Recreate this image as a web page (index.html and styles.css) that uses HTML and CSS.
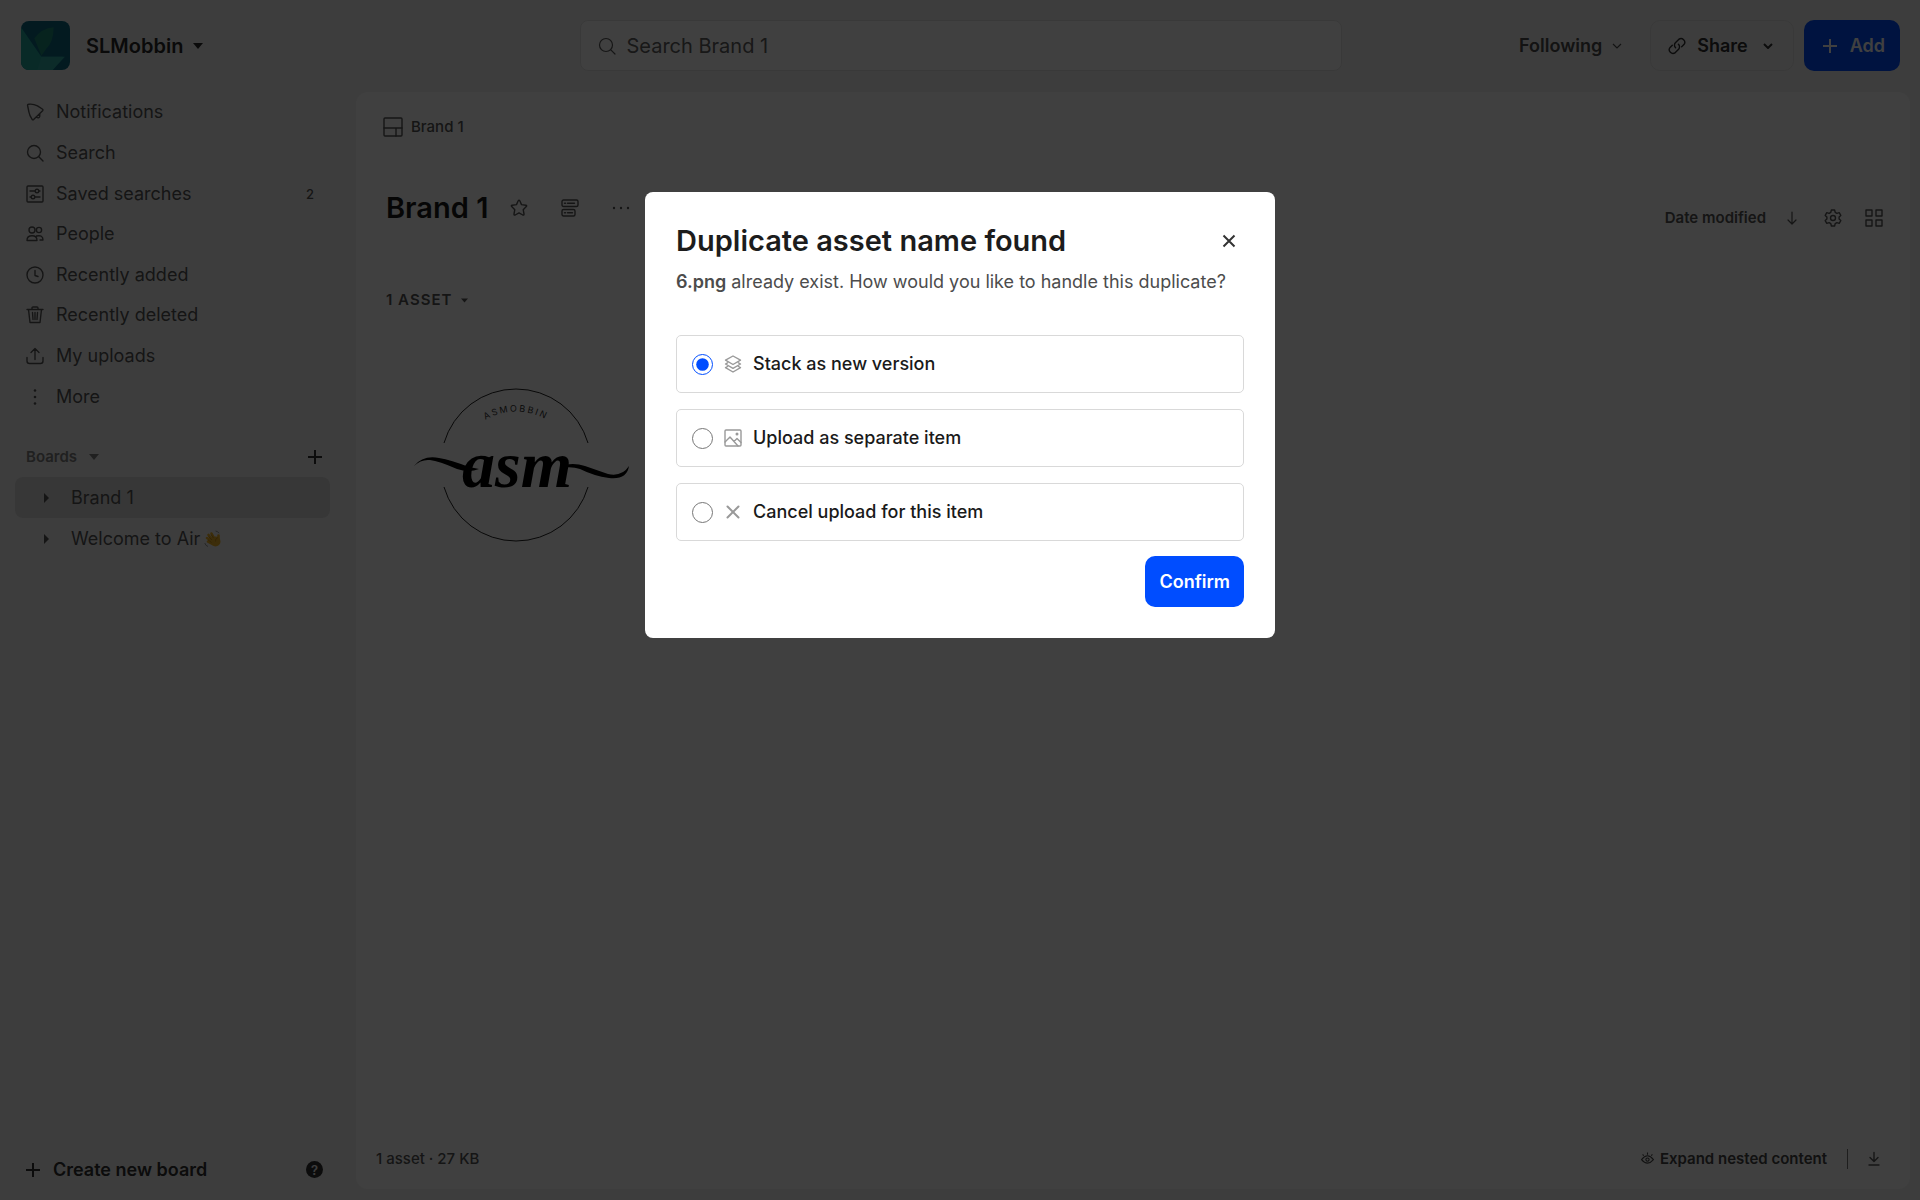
FILE: index.html
```html
<!DOCTYPE html>
<html lang="en">
<head>
    <meta charset="UTF-8">
    <meta name="viewport" content="width=device-width, initial-scale=1.0">
    <title>Brand 1</title>
    <link rel="stylesheet" href="styles.css">
</head>
<body>
    <div class="app">
        <header class="topbar">
            <button class="workspace">
                <svg class="workspace-logo" viewBox="0 0 48 48">
                    <rect width="48" height="48" fill="#0c6880"/>
                    <path d="M0 6 20 35 H41 L31 48 H0z" fill="#24a89c"/>
                    <path d="M13 17 Q20 7 32 6 Q32 20 25 27 L20 34z" fill="#1c8c78"/>
                    <path d="M20 35 H43 L31 48 H16z" fill="#30aca4"/>
                </svg>
                <span>SLMobbin</span>
                <svg class="caret" viewBox="0 0 10 6"><path d="M0 0h10L5 6z"/></svg>
            </button>
            <div class="search-box">
                <svg class="icon thin" viewBox="0 0 18 18"><circle cx="8" cy="8" r="6.5"/><path d="M12.8 12.8 17 17"/></svg>
                <input type="text" placeholder="Search Brand 1" aria-label="Search Brand 1">
            </div>
            <div class="actions">
                <button class="following">Following <svg class="chevron" viewBox="0 0 10 6"><path d="M1 1l4 4 4-4"/></svg></button>
                <button class="share">
                    <svg class="icon" viewBox="0 0 18 18"><path d="M7.6 10.8A3.6 3.6 0 0 1 7.4 5.700L10.700 2.400A3.700 3.700 0 0 1 15.900 7.600L13.700 9.800M10.400 7.200A3.600 3.600 0 0 1 10.600 12.300L7.300 15.600A3.700 3.700 0 0 1 2.100 10.400L4.300 8.200"/></svg>
                    <span>Share</span>
                    <svg class="chevron bold" viewBox="0 0 10 6"><path d="M1 1l4 4 4-4"/></svg>
                </button>
                <button class="btn-primary add"><svg class="plus" viewBox="0 0 14 14"><path d="M7 0v14M0 7h14"/></svg> Add</button>
            </div>
        </header>

        <aside class="sidebar">
            <nav class="nav">
                <a href="#"><svg class="icon" viewBox="0 0 18 18"><path d="M1.600 2.500Q1.300 1.300 2.500 1.300Q7 .6 11.500 2.800L16.300 6Q17.400 6.800 16.600 7.800L7.600 16.600Q6.600 17.300 6 16.200Q3.500 12.500 2.900 9zM10.400 14.200Q12.800 15.800 13.700 13.400L13.800 10.800"/></svg>Notifications</a>
                <a href="#"><svg class="icon" viewBox="0 0 18 18"><circle cx="8" cy="8" r="6.5"/><path d="M12.8 12.8 17 17"/></svg>Search</a>
                <a href="#"><svg class="icon" viewBox="0 0 18 18"><rect x="1" y="1" width="16" height="16" rx="1"/><path d="M4 6h5M13 6h1M4 12h1M9 12h5"/><circle cx="11" cy="6" r="1.800"/><circle cx="7" cy="12" r="1.800"/></svg>Saved searches <span class="count">2</span></a>
                <a href="#"><svg class="icon" viewBox="0 0 18 18"><circle cx="6" cy="5" r="3"/><circle cx="13" cy="5" r="2.600"/><path d="M1 15.500Q1 10.800 6 10.800T11 15.500zM10.500 11Q17 9.500 17 15h-3"/></svg>People</a>
                <a href="#"><svg class="icon" viewBox="0 0 18 18"><circle cx="9" cy="9" r="8"/><path d="M9 4.500V9.500l3 1"/></svg>Recently added</a>
                <a href="#"><svg class="icon" viewBox="0 0 18 18"><path d="M1 3.500h16M6 3.500V2q0-1 1-1h4q1 0 1 1v1.500M2.500 3.500 4 16.500h10l1.500-13M6.500 6.500l.5 7M9 6.500v7M11.500 6.500l-.5 7"/></svg>Recently deleted</a>
                <a href="#"><svg class="icon" viewBox="0 0 18 18"><path d="M9 12.500V1.500M5 5.500l4-4 4 4M1 10.500V14q0 2.500 2.500 2.500h11Q17 16.500 17 14v-3.500"/></svg>My uploads</a>
                <a href="#"><svg class="icon dots" viewBox="0 0 18 18"><circle cx="9" cy="2.500" r="1.300"/><circle cx="9" cy="9" r="1.300"/><circle cx="9" cy="15.500" r="1.300"/></svg>More</a>
            </nav>

            <div class="boards-head">
                <button class="boards-toggle">Boards <svg class="caret" viewBox="0 0 10 6"><path d="M0 0h10L5 6z"/></svg></button>
                <button class="icon-btn" aria-label="New board"><svg class="plus" viewBox="0 0 14 14"><path d="M7 0v14M0 7h14"/></svg></button>
            </div>
            <div class="boards">
                <a class="active" href="#"><svg class="arrow" viewBox="0 0 5 10"><path d="M0 0v10l5-5z"/></svg>Brand 1</a>
                <a href="#"><svg class="arrow" viewBox="0 0 5 10"><path d="M0 0v10l5-5z"/></svg>Welcome to Air
                    <svg class="wave" viewBox="0 0 18 18">
                        <path d="M11 10 7.500 3.500M9.500 11 4.500 5M9 12 3 8M9 14 4 11.500M14.500 11V5.500" stroke="#f0b428" stroke-width="2.600" stroke-linecap="round"/>
                        <circle cx="11.500" cy="11.500" r="5" fill="#f0b428"/>
                        <path d="M9.500 8 7 4.500M8 10 4.500 6.500M7.500 12.500 4 9.800M14 7.500q-3 1-2.500 4" stroke="#b87c18" stroke-width=".7" fill="none"/>
                        <path d="M11.500 1q2.500.3 3.500 2.200M.8 13q.6 2.700 3.200 3.500" stroke="#999" fill="none"/>
                    </svg>
                </a>
            </div>

            <div class="sidebar-foot">
                <button class="create"><svg class="plus" viewBox="0 0 14 14"><path d="M7 0v14M0 7h14"/></svg> Create new board</button>
                <button class="help" aria-label="Help">?</button>
            </div>
        </aside>

        <main class="panel">
            <div class="breadcrumb">
                <svg class="icon" viewBox="0 0 20 20"><rect x="1" y="1" width="18" height="18" rx="1"/><path d="M1 11h18M13 11v8"/></svg>
                <a href="#">Brand 1</a>
            </div>

            <div class="title-row">
                <h1>Brand 1</h1>
                <button class="icon-btn" aria-label="Favorite"><svg class="icon" viewBox="0 0 18 18"><path d="M8.200 1.800Q9 .4 9.800 1.800L11.500 5.600 15.800 6.200Q17.300 6.500 16.300 7.600L13.200 10.700 14 15Q14.200 16.600 12.800 16L9 13.900 5.200 16Q3.800 16.600 4 15L4.800 10.700 1.700 7.600Q.7 6.500 2.200 6.200L6.500 5.600z"/></svg></button>
                <button class="icon-btn" aria-label="Custom fields"><svg class="icon" viewBox="0 0 18 18"><rect x="1" y="1" width="16" height="6.500" rx="1.500"/><rect x="1" y="10.500" width="13" height="6.500" rx="1.500"/><path d="M3.500 4.300h1M6.500 4.300h7M3.500 13.700h1M6.500 13.700h5"/></svg></button>
                <button class="icon-btn" aria-label="More options"><svg class="icon dots" viewBox="0 0 18 18"><circle cx="2" cy="9" r="1.200"/><circle cx="9" cy="9" r="1.200"/><circle cx="16" cy="9" r="1.200"/></svg></button>
                <div class="view-tools">
                    <button class="sort">Date modified</button>
                    <button class="icon-btn" aria-label="Sort direction"><svg class="icon thin" viewBox="0 0 18 18"><path d="M9 3v12M5 11l4 4 4-4"/></svg></button>
                    <button class="icon-btn" aria-label="View settings"><svg class="icon" viewBox="0 0 18 18"><path d="M7.400 1h3.200l.6 2.300 1.700 1 2.300-.7 1.600 2.800L15.100 8v2l1.700 1.600-1.600 2.800-2.300-.7-1.700 1-.6 2.300H7.400l-.6-2.300-1.700-1-2.300.7-1.600-2.800L2.900 10V8L1.200 6.400l1.600-2.800 2.300.7 1.700-1z"/><circle cx="9" cy="9" r="2.500"/></svg></button>
                    <button class="icon-btn" aria-label="Grid view"><svg class="icon" viewBox="0 0 18 18"><path d="M1 1h6v6H1zM11 1h6v6h-6zM1 11h6v6H1zM11 11h6v6h-6z"/></svg></button>
                </div>
            </div>

            <button class="asset-count">1 ASSET <svg class="caret" viewBox="0 0 10 6"><path d="M0 0h10L5 6z"/></svg></button>

            <div class="assets">
                <svg class="asset" viewBox="0 0 260 270" role="img" aria-label="6.png">
                    <path d="M58 113A75 75 0 0 1 202 113" fill="none" stroke="#222"/>
                    <path d="M58 157A75 75 0 0 0 202 157" fill="none" stroke="#222"/>
                    <path id="name-arc" d="M87 99A62 62 0 0 1 173 99" fill="none"/>
                    <text class="logo-name"><textPath href="#name-arc" startOffset="50%">ASMOBBIN</textPath></text>
                    <path d="M28 136Q37 125 53 128Q65 130 83 137L93 139Q83 143 71 139Q53 131 44 130Q35 129 28 136zM174 136Q187 132 199 136L222 144Q236 147 243 136Q241 150 223 148Q208 146 194 139Q186 136 174 138z"/>
                    <text class="logo-word" x="131" y="157">asm</text>
                </svg>
            </div>

            <footer class="panel-foot">
                <span>1 asset · 27 KB</span>
                <button class="expand"><svg class="eye" viewBox="0 0 12 12"><path d="M.5 7Q6 0 11.500 7Q6 13.500.5 7zM2.500 3.500 1.500 2.200M6 2.500V.5M9.500 3.500l1-1.300"/><circle cx="6" cy="7" r="1.500"/></svg>Expand nested content</button>
                <span class="divider"></span>
                <button class="icon-btn" aria-label="Download"><svg class="icon" viewBox="0 0 18 18"><path d="M9 2.500v9M5 7.500l4 4 4-4M4 15h10"/></svg></button>
            </footer>
        </main>
    </div>

    <div class="overlay">
        <form class="modal" role="dialog" aria-labelledby="modal-title">
            <div class="modal-head">
                <h2 id="modal-title">Duplicate asset name found</h2>
                <button type="button" class="close" aria-label="Close"><svg viewBox="0 0 14 14"><path d="M1.500 1.500l11 11M12.500 1.500l-11 11"/></svg></button>
            </div>
            <p><strong>6.png</strong> already exist. How would you like to handle this duplicate?</p>
            <div class="options">
                <label class="option">
                    <input type="radio" name="duplicate" value="stack" checked>
                    <svg class="icon" viewBox="0 0 18 18"><path d="M9 1l7.500 4.200L9 9.500 1.500 5.200zM3.500 7.800l-2 1.200L9 13.300 16.500 9l-2-1.200M3.500 11.500l-2 1.200L9 17l7.500-4.300-2-1.200"/></svg>
                    <span>Stack as new version</span>
                </label>
                <label class="option">
                    <input type="radio" name="duplicate" value="separate">
                    <svg class="icon" viewBox="0 0 18 18"><rect x="1" y="1" width="16" height="16" rx="1"/><path d="M1 13l5-5 8 9M10 12.500l3-3 4 4"/><circle cx="13" cy="5" r=".8"/></svg>
                    <span>Upload as separate item</span>
                </label>
                <label class="option">
                    <input type="radio" name="duplicate" value="cancel">
                    <svg class="icon heavy" viewBox="0 0 18 18"><path d="M3.500 3.500l11 11M14.500 3.500l-11 11"/></svg>
                    <span>Cancel upload for this item</span>
                </label>
            </div>
            <button type="button" class="btn-primary confirm">Confirm</button>
        </form>
    </div>
</body>
</html>
```

FILE: styles.css
```css
* {
    box-sizing: border-box;
}
body {
    margin: 0;
    font-family: Inter, "Liberation Sans", sans-serif;
    font-size: 18px;
    line-height: 24px;
    color: #565656;
    background-color: #f4f4f4;
}
button {
    display: flex;
    align-items: center;
    padding: 0;
    border: none;
    background: none;
    color: inherit;
    font: inherit;
    cursor: pointer;
}
a {
    color: inherit;
    text-decoration: none;
}
svg {
    flex: none;
}

/* icons */
.icon {
    width: 18px;
    height: 18px;
    fill: none;
    stroke: currentColor;
    stroke-width: 1.4;
    stroke-linecap: round;
    stroke-linejoin: round;
}
.icon.dots {
    fill: currentColor;
    stroke: none;
}
.icon.thin {
    stroke-width: 1.2;
}
.icon.heavy {
    stroke-width: 2;
}
.caret {
    width: 10px;
    height: 6px;
    fill: currentColor;
}
.arrow {
    width: 5px;
    height: 10px;
    fill: currentColor;
}
.chevron {
    width: 10px;
    height: 6px;
    fill: none;
    stroke: currentColor;
    stroke-width: 1.2;
}
.chevron.bold {
    stroke-width: 2;
}
.plus {
    width: 14px;
    height: 14px;
    stroke: currentColor;
    stroke-width: 2;
}
.icon-btn {
    justify-content: center;
    width: 41px;
    height: 41px;
}

.app {
    display: grid;
    grid-template-columns: 356px 1fr;
    grid-template-rows: 92px 1fr;
    height: 100vh;
}

/* top bar */
.topbar {
    grid-column: 1 / 3;
    display: grid;
    grid-template-columns: 1fr 762px 1fr;
    align-items: center;
    padding: 0 20px 1px 21px;
}
.workspace {
    gap: 10px;
    font-size: 20px;
    font-weight: 600;
    color: #2a2a2a;
}
.workspace-logo {
    width: 49px;
    height: 49px;
    margin-right: 6px;
    border-radius: 8px;
}
.search-box {
    display: flex;
    align-items: center;
    gap: 11px;
    height: 51px;
    padding: 0 17px;
    border: 1px solid #e4e4e4;
    border-radius: 8px;
    background-color: #fff;
}
.search-box input {
    flex: 1;
    border: none;
    outline: none;
    padding: 0;
    background: none;
    font: inherit;
    font-size: 20px;
}
.search-box input::placeholder {
    color: #606060;
    opacity: 1;
}
.actions {
    display: flex;
    justify-content: flex-end;
    align-items: center;
    gap: 10px;
    font-weight: 600;
}
.following {
    gap: 10px;
    margin-right: 18px;
    color: #4c4c4c;
}
.share {
    gap: 11px;
    height: 51px;
    padding: 0 20px 0 17px;
    border: 1px solid #e4e4e4;
    border-radius: 10px;
    color: #303030;
}
.share .chevron {
    margin-left: 4px;
}
.btn-primary {
    height: 51px;
    padding: 0 14px;
    border-radius: 10px;
    background-color: #004dff;
    color: #fff;
    font-weight: 600;
}
.add {
    gap: 13px;
    padding: 0 15px 0 19px;
}

/* sidebar */
.sidebar {
    display: flex;
    flex-direction: column;
    padding: 0 26px 10px 15px;
}
.nav {
    display: grid;
    min-height: 325px;
}
.nav a {
    display: flex;
    align-items: center;
    gap: 12px;
    padding: 0 16px 0 11px;
}
.count {
    margin-left: auto;
    font-size: 13px;
    font-weight: 500;
}
.boards-head {
    display: flex;
    justify-content: space-between;
    align-items: center;
    margin-top: 19px;
    padding-left: 11px;
}
.boards-head .icon-btn {
    width: 31px;
    color: #303030;
}
.boards-toggle {
    gap: 12px;
    font-size: 15px;
    font-weight: 600;
    color: #808080;
}
.boards a {
    display: flex;
    align-items: center;
    height: 41px;
    padding-left: 29px;
    border-radius: 8px;
}
.boards a.active {
    background-color: #dadada;
}
.arrow {
    margin-right: 22px;
}
.wave {
    width: 18px;
    height: 18px;
    margin-left: 4px;
}
.sidebar-foot {
    display: flex;
    justify-content: space-between;
    align-items: center;
    height: 41px;
    margin-top: auto;
    padding: 0 7px 0 11px;
    color: #303030;
}
.create {
    gap: 13px;
    font-weight: 600;
}
.help {
    justify-content: center;
    width: 17px;
    height: 17px;
    border-radius: 50%;
    background-color: #303030;
    color: #f4f4f4;
    font-size: 13px;
    font-weight: 600;
}

/* board panel */
.panel {
    display: flex;
    flex-direction: column;
    margin: 0 10px 11px 0;
    padding: 14px 16px 10px 30px;
    border-radius: 12px;
    background-color: #fff;
}
.breadcrumb {
    display: flex;
    align-items: center;
    gap: 8px;
    height: 41px;
    margin-left: -3px;
    font-size: 15px;
    font-weight: 500;
}
.breadcrumb .icon {
    width: 20px;
    height: 20px;
}
.title-row {
    display: flex;
    align-items: center;
    gap: 10px;
    margin-top: 30px;
}
h1 {
    margin: 0;
    font-size: 29px;
    line-height: 40px;
    font-weight: 600;
    color: #1a1a1a;
}
.view-tools {
    display: flex;
    align-items: center;
    margin-left: auto;
    margin-top: 20px;
}
.sort {
    margin-right: 5px;
    font-size: 15px;
    font-weight: 600;
}
.asset-count {
    gap: 9px;
    align-self: flex-start;
    height: 24px;
    margin-top: 50px;
    font-size: 15px;
    font-weight: 600;
    letter-spacing: 1px;
}
.asset-count .caret {
    width: 7px;
    height: 5px;
}
.assets {
    display: flex;
    margin-top: 18px;
}
.asset {
    width: 260px;
    height: 270px;
}
.logo-name {
    font-size: 9px;
    letter-spacing: 2px;
    text-anchor: middle;
    fill: #333;
}
.logo-word {
    font-family: "Liberation Serif", serif;
    font-size: 66px;
    font-style: italic;
    font-weight: bold;
    text-anchor: middle;
}
.panel-foot {
    display: flex;
    align-items: center;
    height: 41px;
    margin-top: auto;
    margin-left: -10px;
    font-size: 15px;
    font-weight: 500;
}
.expand {
    gap: 6px;
    margin-left: auto;
    font-weight: 600;
    color: #444;
}
.eye {
    width: 13px;
    height: 13px;
    fill: none;
    stroke: currentColor;
}
.divider {
    width: 1px;
    height: 20px;
    margin: 0 5px 0 20px;
    background-color: #777;
}

/* duplicate dialog */
.overlay {
    position: fixed;
    inset: 0;
    display: flex;
    justify-content: center;
    align-items: flex-start;
    padding-top: 16vh;
    background-color: rgba(0, 0, 0, 0.75);
}
.modal {
    width: 630px;
    padding: 28px 31px 31px;
    border-radius: 8px;
    background-color: #fff;
}
.modal-head {
    display: flex;
    justify-content: space-between;
    align-items: center;
}
h2 {
    margin: 0;
    font-size: 29px;
    line-height: 42px;
    font-weight: 600;
    color: #1c1c1c;
}
.close {
    justify-content: center;
    width: 31px;
    height: 31px;
    color: #333;
}
.close svg {
    width: 14px;
    height: 14px;
    stroke: currentColor;
    stroke-width: 2;
}
.modal p {
    margin: 8px 0 41px;
    color: #4c4c4c;
}
.modal strong {
    font-weight: 600;
}
.options {
    display: grid;
    gap: 16px;
}
.option {
    display: flex;
    align-items: center;
    height: 58px;
    padding: 0 15px;
    border: 1px solid #d9d9d9;
    border-radius: 5px;
    font-weight: 500;
    color: #1a1a1a;
}
.option input {
    width: 21px;
    height: 21px;
    margin: 0 11px 0 0;
    accent-color: #004dff;
}
.option .icon {
    margin-right: 11px;
    color: #999;
}
.confirm {
    margin: 15px 0 0 auto;
}
```
